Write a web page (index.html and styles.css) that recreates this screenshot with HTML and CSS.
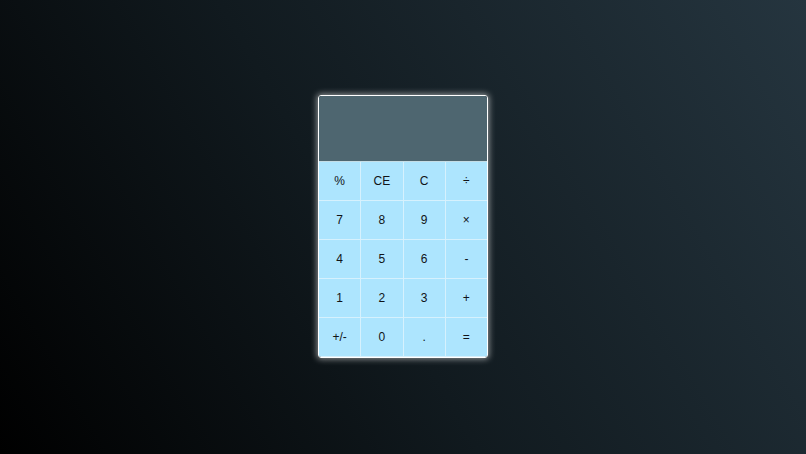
FILE: index.html
```html
<!DOCTYPE html>
<html>
<head>
<meta charset="utf-8">
<link rel="stylesheet" href="styles.css">
</head>
<body>
<div class="calc">
  <div class="display"></div>
  <div class="keys">
    <button class="key">%</button>
    <button class="key">CE</button>
    <button class="key">C</button>
    <button class="key">÷</button>
    <button class="key">7</button>
    <button class="key">8</button>
    <button class="key">9</button>
    <button class="key">×</button>
    <button class="key">4</button>
    <button class="key">5</button>
    <button class="key">6</button>
    <button class="key">-</button>
    <button class="key">1</button>
    <button class="key">2</button>
    <button class="key">3</button>
    <button class="key">+</button>
    <button class="key">+/-</button>
    <button class="key">0</button>
    <button class="key">.</button>
    <button class="key">=</button>
  </div>
</div>
</body>
</html>
```

FILE: styles.css
```css
html, body {
  margin: 0;
  height: 100%;
}
body {
  width: 806px;
  height: 454px;
  background: linear-gradient(60deg, #000000 0%, #111a1f 45%, #25353f 100%);
  display: flex;
  align-items: center;
  justify-content: center;
  font-family: "Liberation Sans", Arial, sans-serif;
}
.calc {
  width: 168px;
  margin-top: -2px;
  border: 1px solid #ffffff;
  border-radius: 3px;
  box-shadow: 0 0 6px 1px rgba(255, 255, 255, 0.55);
  overflow: hidden;
  display: flex;
  flex-direction: column;
}
.display {
  height: 65px;
  background: #4e6670;
  border-bottom: 1px solid #c4dde6;
}
.keys {
  display: grid;
  grid-template-columns: repeat(4, 1fr);
  grid-auto-rows: 38px;
  gap: 1px;
  padding-bottom: 1px;
  background: #d6f1fd;
}
.key {
  border: none;
  margin: 0;
  padding: 0;
  background: #ade5fe;
  color: #111417;
  font-family: "Liberation Sans", Arial, sans-serif;
  font-size: 12px;
  display: flex;
  align-items: center;
  justify-content: center;
}
```
